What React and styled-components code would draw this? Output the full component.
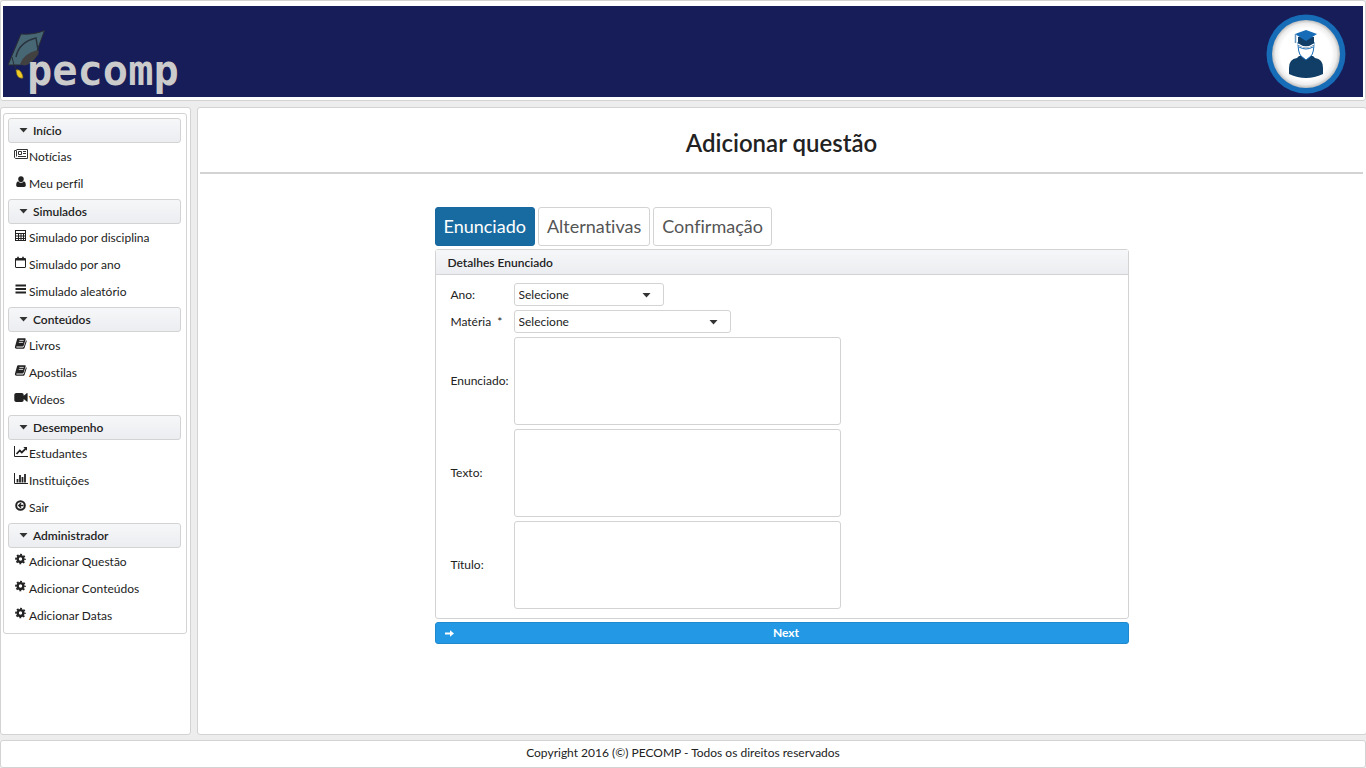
import React from 'react';
import styled, { createGlobalStyle } from 'styled-components';

const GlobalStyle = createGlobalStyle`
  *, *::before, *::after { box-sizing: border-box; }
  html, body { margin: 0; padding: 0; }
  body {
    background: #ededed;
    color: #222222;
    font-family: Lato, "Liberation Sans", sans-serif;
    font-size: 12px;
    line-height: 16px;
    font-variant-ligatures: none;
    overflow-x: hidden;
  }
`;

const line = '#d3d3d3';

const Page = styled.div`
  display: flex;
  flex-direction: column;
  gap: 5px;
  min-height: 100vh;
`;

const Box = styled.div`
  background: #ffffff;
  border: 1px solid ${line};
  border-radius: 3px;
`;

const Header = styled(Box).attrs({ as: 'header' })`
  padding: 5px 2px 3px;
  margin-bottom: 1px;
`;

const Banner = styled.div`
  display: flex;
  justify-content: space-between;
  align-items: flex-end;
  height: 91px;
  padding: 0 17px 0 3px;
  background: #171d59;
`;

const HomeLink = styled.a`
  display: block;
  line-height: 0;
`;

const ProfileLink = styled(HomeLink)`
  padding-bottom: 3px;
`;

const Body = styled.div`
  display: flex;
  flex: 1;
  gap: 6px;
  margin-right: -1px;
`;

const Sidebar = styled(Box).attrs({ as: 'aside' })`
  flex: 0 0 191px;
  padding: 5px 3px 5px 2px;
`;

const Menu = styled(Box).attrs({ as: 'nav' })`
  padding: 4px 5px 2px 4px;
`;

const Group = styled.section`
  padding-bottom: 2px;
`;

const GroupTitle = styled.h3`
  display: flex;
  align-items: center;
  gap: 5px;
  height: 25px;
  margin: 0;
  padding: 0 10px;
  border: 1px solid ${line};
  border-radius: 3px;
  background: linear-gradient(#f6f7f9, #ebedf0);
  font-size: 12px;
  font-weight: 600;
`;

const Links = styled.ul`
  margin: 0;
  padding: 0;
  list-style: none;
`;

const MenuLink = styled.a`
  display: flex;
  align-items: center;
  height: 27px;
  padding-left: 5px;
  color: #222222;
  text-decoration: none;

  svg { margin: 0 1px 4px 0; }
`;

const Content = styled(Box).attrs({ as: 'main' })`
  flex: 1;
  padding: 0 3px 0 2px;
`;

const Title = styled.h1`
  margin: 0 0 33px;
  padding: 20px 0 14px;
  border-bottom: 2px solid ${line};
  font-size: 24px;
  line-height: 30px;
  font-weight: 600;
  text-align: center;
`;

const Wizard = styled.form`
  display: flex;
  flex-direction: column;
  gap: 3px;
  max-width: 694px;
  margin: 0 auto;
`;

const Steps = styled.ol`
  display: flex;
  gap: 3px;
  margin: 0;
  padding: 0;
  list-style: none;
`;

const Step = styled.li`
  padding: 7px 8px;
  border: 1px solid ${(p) => (p.$current ? '#1767a0' : line)};
  border-radius: 3px;
  background: ${(p) => (p.$current ? '#186ba0' : '#ffffff')};
  color: ${(p) => (p.$current ? '#ffffff' : '#555555')};
  font-size: 18px;
  line-height: 23px;
`;

const Panel = styled(Box).attrs({ as: 'section' })``;

const PanelTitle = styled.h2`
  margin: 0;
  padding: 5px 12px 3px;
  border-bottom: 1px solid ${line};
  background: linear-gradient(#f6f7f9, #ebedf0);
  font-size: 12px;
  line-height: 16px;
  font-weight: 600;
`;

const Fields = styled.div`
  display: grid;
  grid-template-columns: 63px 1fr;
  align-items: center;
  row-gap: 4px;
  padding: 8px 15px 9px;
`;

const Label = styled.label`
  white-space: pre;
`;

const Picker = styled.div`
  position: relative;
  width: ${(p) => p.$width}px;

  svg {
    position: absolute;
    right: 13px;
    top: 10px;
    pointer-events: none;
  }
`;

const Select = styled.select`
  display: block;
  appearance: none;
  width: 100%;
  height: 23px;
  padding: 0 4px;
  border: 1px solid ${line};
  border-radius: 3px;
  background: #ffffff;
  color: #222222;
  font: inherit;
`;

const TextArea = styled.textarea`
  display: block;
  width: 327px;
  height: 88px;
  padding: 4px;
  border: 1px solid ${line};
  border-radius: 3px;
  font: inherit;
  resize: none;
`;

const Next = styled.button`
  display: flex;
  align-items: center;
  height: 22px;
  padding: 0 9px;
  border: 1px solid #1f89ce;
  border-radius: 3px;
  background: #2399e5;
  color: #ffffff;
  font: inherit;
  font-weight: 700;

  span { flex: 1; }
`;

const Footer = styled(Box).attrs({ as: 'footer' })`
  height: 28px;
  padding: 4px;
  text-align: center;
`;

const Caret = () => (
  <svg width="9" height="5" viewBox="0 0 9 5" aria-hidden="true">
    <path d="M0.500 0h8L4.500 4.600z" fill="#333" />
  </svg>
);

const shapes = {
  news: (
    <g fill="none" stroke="#333">
      <path d="M2.500 1.500h11v9h-12q-1-.5-1-1.500V2.500h2v6" />
      <path d="M4.500 3.500h3v3h-3zM9 3.500h3M9 5.500h3M4 8.500h8" />
    </g>
  ),
  user: <path d="M7 1.200c1.800 0 2.800 1.200 2.800 2.900S8.600 7.300 7 7.300 4.200 5.800 4.200 4.100 5.200 1.200 7 1.200zM4.300 6.300C5 7.500 6 8 7 8s2-.5 2.700-1.700c1.500.2 2.100 1.700 2.100 4 0 .9-.7 1.700-1.600 1.700H3.800c-.9 0-1.600-.8-1.600-1.700 0-2.300.6-3.800 2.100-4z" />,
  table: (
    <g fill="none" stroke="#222">
      <rect x="1.500" y="1.500" width="10" height="10" />
      <path d="M1 4.500h11M1 7h11M1 9.500h11M4.500 4v8M7 4v8M9.500 4v8" />
    </g>
  ),
  calendar: (
    <g fill="none" stroke="#222">
      <rect x="1.500" y="2.500" width="10" height="9" rx=".5" />
      <path d="M1 3.500h11" strokeWidth="2" />
      <path d="M4 .8v2.400M9 .8v2.400" strokeWidth="1.600" />
    </g>
  ),
  bars: <path d="M1.500 2.500h10.500M1.500 6h10.500M1.500 9.500h10.500" stroke="#222" strokeWidth="1.800" />,
  book: (
    <g>
      <path d="M4.300 1.200h6.400c.8 0 1.100.5.900 1.200L9.700 8.600c-.2.700-.6 1-1.300 1H2.700c-.6 0-.7.8 0 .8h6.200c.5 0 .9-.3 1-.8L12 3.200c.7.3.8.8.6 1.300l-2 6.200c-.2.700-.8 1.100-1.500 1.100H2.500C1.200 11.800.6 10.600 1 9.500l2-7c.2-.8.700-1.300 1.300-1.300z" />
      <path d="M5.400 3.400h4.300M4.800 5.400h4.300" stroke="#fff" strokeWidth=".8" />
    </g>
  ),
  video: <path d="M2.300 2h5.400C8.900 2 9.700 2.800 9.700 4v.8l3-2.600c.4-.3.900-.1.900.4v7.600c0 .5-.5.700-.9.400l-3-2.600V9c0 1.200-.8 2-2 2H2.300c-1.200 0-2-.8-2-2V4c0-1.200.8-2 2-2z" />,
  lineChart: (
    <g>
      <path d="M.500 1v10.500H14" fill="none" stroke="#222" />
      <path d="M2.500 9l3.300-3.500 2 2L11.500 3.800" fill="none" stroke="#222" strokeWidth="1.800" />
      <path d="M9.300 2h3.700v3.700z" />
    </g>
  ),
  barChart: (
    <g fill="none" stroke="#222">
      <path d="M.500 1v10.500H14" />
      <path d="M3.500 10.500V7M6 10.500V3M8.500 10.500V5M11 10.500V2" strokeWidth="1.800" />
    </g>
  ),
  back: (
    <g fill="none" stroke="#222">
      <circle cx="6.500" cy="6.500" r="4.300" strokeWidth="2" />
      <path d="M9.500 6.500H5M7 4.300L4.800 6.500 7 8.700" strokeWidth="1.400" />
    </g>
  ),
  gear: (
    <g fill="none" stroke="#222">
      <circle cx="6.500" cy="6" r="2.900" strokeWidth="2.400" />
      <circle cx="6.500" cy="6" r="4.500" strokeWidth="1.700" strokeDasharray="1.900 1.634" strokeDashoffset=".95" />
    </g>
  ),
};

const Icon = ({ name }) => (
  <svg width="15" height="13" viewBox="-1 0 15 13" fill="#222" aria-hidden="true">
    {shapes[name]}
  </svg>
);

const Logo = () => (
  <svg width="176" height="91" viewBox="6 6 176 91" role="img" aria-label="pecomp">
    <path d="M21 34Q34 35 44.500 30.500L37 51 29 56 21 65 8 65z" fill="#486775" stroke="#292d35" strokeLinejoin="round" />
    <path d="M38 50Q24 53 20 64q8 5 17-8 3-3 1-6z" fill="#414141" />
    <path d="M16 57Q19 42 36 38L38 50" fill="none" stroke="#29333e" strokeWidth="1.500" />
    <path d="M12 57Q13 64 17 71" fill="none" stroke="#292d35" />
    <path d="M16 70q3-1 5 2 2 3 2 6-4 1-6-3z" fill="#f0ca25" stroke="#80701d" strokeWidth=".6" />
    <text
      x="27"
      y="85"
      fill="#cbcbcb"
      fontFamily="'DejaVu Sans Mono', monospace"
      fontWeight="700"
      fontSize="42"
    >
      pecomp
    </text>
  </svg>
);

const Avatar = () => (
  <svg width="80" height="80" viewBox="0 0 80 80" aria-hidden="true">
    <defs>
      <radialGradient id="disc">
        <stop offset=".75" stopColor="#fff" />
        <stop offset=".9" stopColor="#ededed" />
        <stop offset="1" stopColor="#bcbcbc" />
      </radialGradient>
    </defs>
    <circle cx="40" cy="40" r="39.500" fill="#176cb7" />
    <circle cx="40" cy="40" r="34" fill="url(#disc)" />
    <path d="M33 42l-2 2q-8 1-8 10v6q17 8 34 0v-6q0-9-8-10l-2-2z" fill="#103e66" />
    <path d="M32 28q0 11 3 14l5 4 5-4q3-3 3-14l-8 3z" fill="#fff" stroke="#176cb7" />
    <path d="M32 23h16v8q-4 3-8 3t-8-3z" fill="#103e66" />
    <path d="M32 30q4 3 8 3t8-3" fill="none" stroke="#fff" strokeWidth="1.500" />
    <path d="M33 33q7 4 14 0" fill="none" stroke="#176cb7" />
    <path d="M40 16l11 4-11 7-11-7z" fill="#176cb7" />
    <path d="M29.500 20v9" stroke="#6696bd" strokeWidth="1.500" />
  </svg>
);

const ArrowRight = () => (
  <svg width="9" height="9" viewBox="0 0 9 9" aria-hidden="true">
    <path d="M0 4.500h6" stroke="#fff" strokeWidth="2" />
    <path d="M5 1.200L9 4.500 5 7.800z" fill="#fff" />
  </svg>
);

const groups = [
  ['Início', [['news', 'Notícias'], ['user', 'Meu perfil']]],
  ['Simulados', [['table', 'Simulado por disciplina'], ['calendar', 'Simulado por ano'], ['bars', 'Simulado aleatório']]],
  ['Conteúdos', [['book', 'Livros'], ['book', 'Apostilas'], ['video', 'Vídeos']]],
  ['Desempenho', [['lineChart', 'Estudantes'], ['barChart', 'Instituições'], ['back', 'Sair']]],
  ['Administrador', [['gear', 'Adicionar Questão'], ['gear', 'Adicionar Conteúdos'], ['gear', 'Adicionar Datas']]],
];

export default function App() {
  return (
    <Page>
      <GlobalStyle />
      <Header>
        <Banner>
          <HomeLink href="#inicio"><Logo /></HomeLink>
          <ProfileLink href="#perfil" aria-label="Meu perfil"><Avatar /></ProfileLink>
        </Banner>
      </Header>
      <Body>
        <Sidebar>
          <Menu>
            {groups.map(([title, items]) => (
              <Group key={title}>
                <GroupTitle><Caret />{title}</GroupTitle>
                <Links>
                  {items.map(([icon, text]) => (
                    <li key={text}>
                      <MenuLink href="#"><Icon name={icon} />{text}</MenuLink>
                    </li>
                  ))}
                </Links>
              </Group>
            ))}
          </Menu>
        </Sidebar>
        <Content>
          <Title>Adicionar questão</Title>
          <Wizard onSubmit={(e) => e.preventDefault()}>
            <Steps>
              <Step $current aria-current="step">Enunciado</Step>
              <Step>Alternativas</Step>
              <Step>Confirmação</Step>
            </Steps>
            <Panel>
              <PanelTitle>Detalhes Enunciado</PanelTitle>
              <Fields>
                <Label htmlFor="ano">Ano:</Label>
                <Picker $width={150}>
                  <Select id="ano"><option>Selecione</option></Select>
                  <Caret />
                </Picker>
                <Label htmlFor="materia">Matéria  *</Label>
                <Picker $width={217}>
                  <Select id="materia"><option>Selecione</option></Select>
                  <Caret />
                </Picker>
                <Label htmlFor="enunciado">Enunciado:</Label>
                <TextArea id="enunciado" />
                <Label htmlFor="texto">Texto:</Label>
                <TextArea id="texto" />
                <Label htmlFor="titulo">Título:</Label>
                <TextArea id="titulo" />
              </Fields>
            </Panel>
            <Next type="submit"><ArrowRight /><span>Next</span></Next>
          </Wizard>
        </Content>
      </Body>
      <Footer>Copyright 2016 (©) PECOMP - Todos os direitos reservados</Footer>
    </Page>
  );
}
